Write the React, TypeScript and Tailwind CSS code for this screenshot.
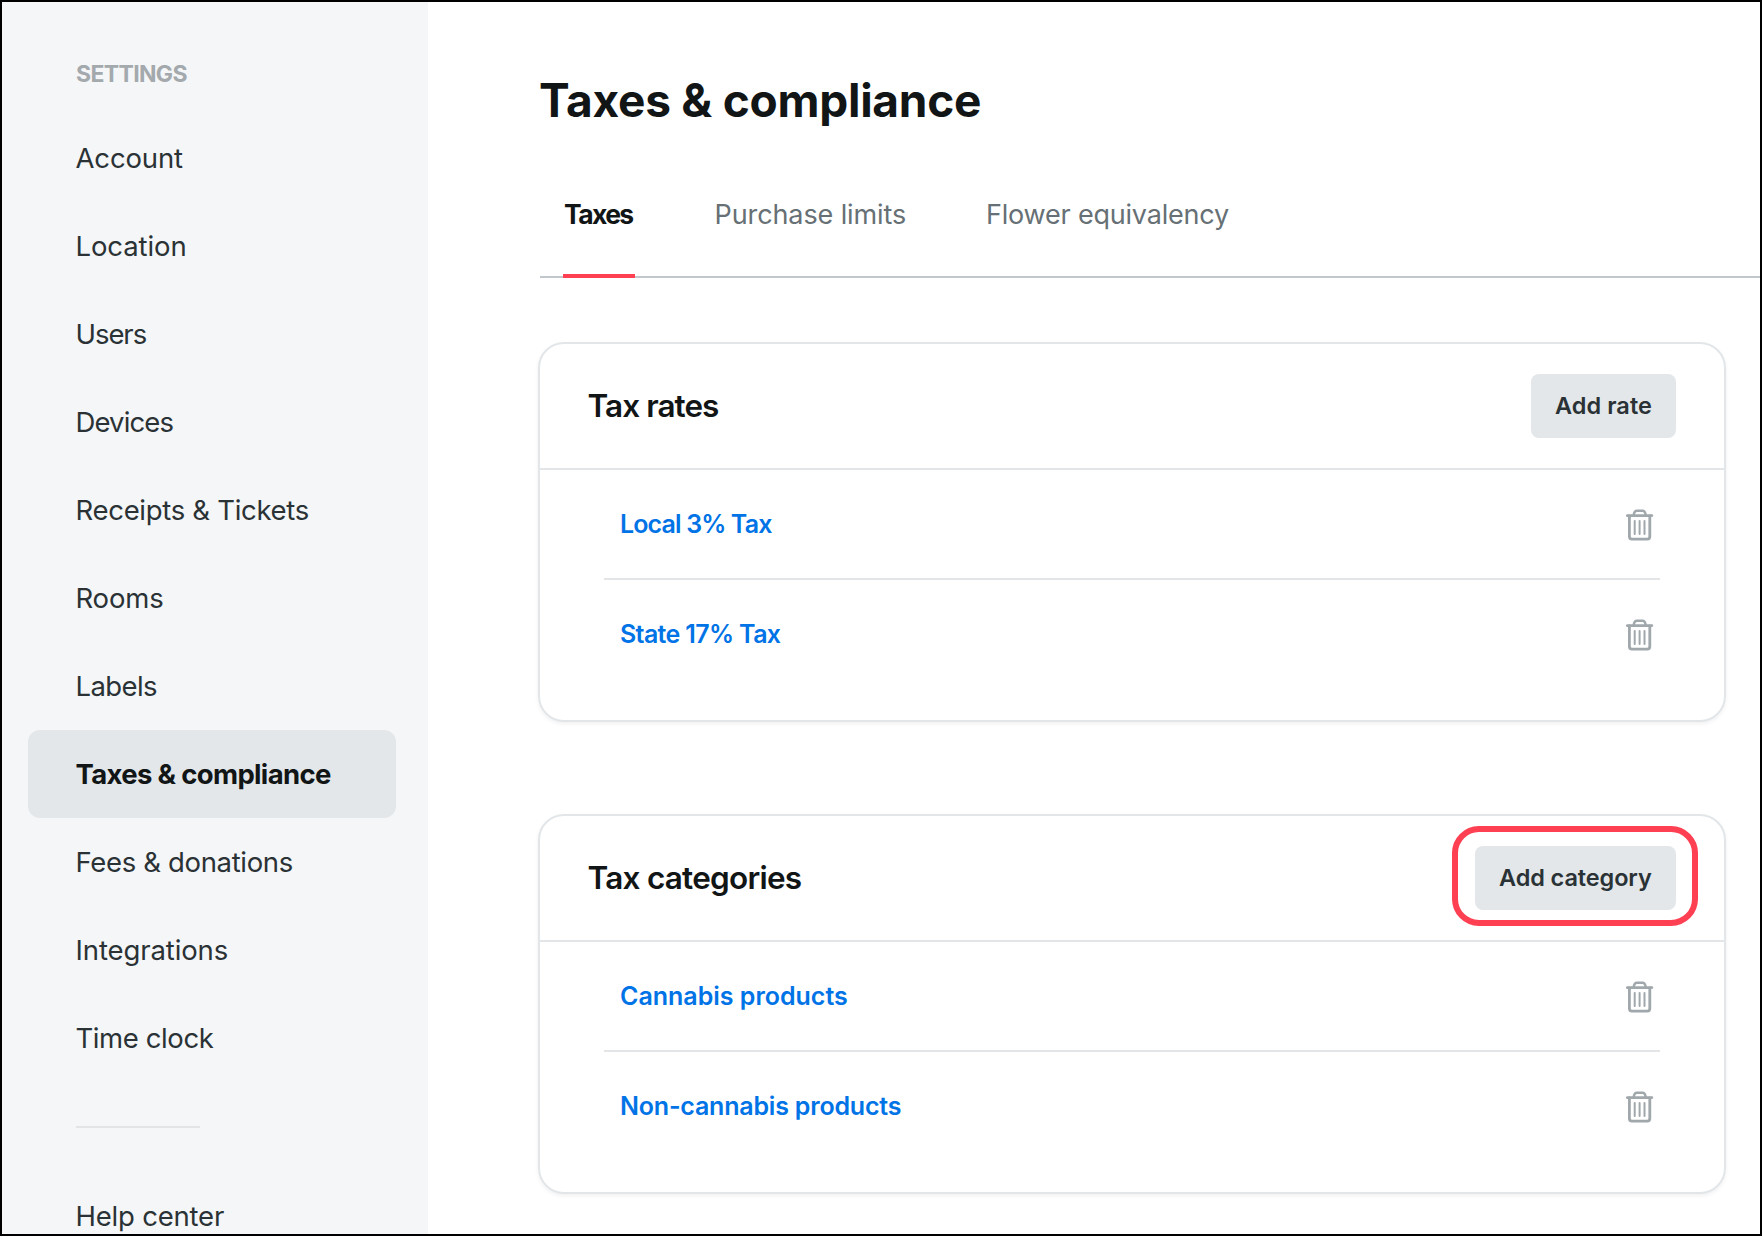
type NavEntry = { label: string; tracking: string; active?: boolean };

const navItems: NavEntry[] = [
  { label: "Account", tracking: "tracking-[-0.15px]" },
  { label: "Location", tracking: "tracking-[-0.1px]" },
  { label: "Users", tracking: "tracking-[-1.05px]" },
  { label: "Devices", tracking: "tracking-[-0.88px]" },
  { label: "Receipts & Tickets", tracking: "tracking-[-0.3px]" },
  { label: "Rooms", tracking: "tracking-[-0.17px]" },
  { label: "Labels", tracking: "tracking-[-0.62px]" },
  { label: "Taxes & compliance", tracking: "tracking-[-0.66px]", active: true },
  { label: "Fees & donations", tracking: "tracking-[-0.34px]" },
  { label: "Integrations", tracking: "tracking-[-0.11px]" },
  { label: "Time clock", tracking: "tracking-[-0.4px]" },
];

type Row = { label: string; tracking: string };

function NavItem({ label, tracking, active }: NavEntry) {
  return (
    <a
      className={`flex h-[88px] shrink-0 items-center whitespace-nowrap rounded-xl pl-[47.5px] pt-0.5 text-[27.5px] ${tracking} ${
        active ? "bg-[#e3e7ea] font-bold text-[#111516]" : "text-[#2a3235]"
      }`}
    >
      {label}
    </a>
  );
}

function TrashIcon() {
  return (
    <svg
      className="mt-0.5 h-8 w-7"
      viewBox="0 0 28 32"
      fill="none"
      stroke="#a1a8ac"
      strokeLinecap="round"
      strokeLinejoin="round"
    >
      <path strokeWidth="2.7" d="M1.3 6.6H25.9" />
      <path strokeWidth="2.5" d="M7.7 6.2C8 3 9.2 1.7 11 1.7H16.4C18.2 1.7 19.4 3 19.7 6.2" />
      <path strokeWidth="2.8" d="M3.4 7V27.6C3.4 29.3 4.1 30.1 5.8 30.1H21.4C23.1 30.1 23.8 29.3 23.8 27.6V7" />
      <path strokeWidth="2" d="M8.7 12V24.9M13.6 12V24.9M18.5 12V24.9" />
    </svg>
  );
}

function Card({
  title,
  titleTracking,
  action,
  actionClass,
  rows,
  highlighted,
}: {
  title: string;
  titleTracking: string;
  action: string;
  actionClass: string;
  rows: Row[];
  highlighted?: boolean;
}) {
  return (
    <section className="h-[380px] w-[1188px] rounded-[26px] border-2 border-[#e2e6e9] shadow-[0_2px_4px_rgba(0,0,0,0.06)]">
      <header className="flex h-[126px] items-center justify-between border-b-2 border-[#e2e6e9] pl-[47.5px] pr-12">
        <h2 className={`text-[31.5px] font-semibold text-[#111516] ${titleTracking}`}>{title}</h2>
        <div className="relative">
          <button
            className={`flex h-16 items-center whitespace-nowrap rounded-lg bg-[#e3e7ea] pl-6 text-[23.5px] font-semibold text-[#2a3235] ${actionClass}`}
          >
            {action}
          </button>
          {highlighted && (
            <div className="pointer-events-none absolute -bottom-4 -left-[23px] -right-[22px] -top-5 rounded-[27px] border-[6px] border-[#ff4053]" />
          )}
        </div>
      </header>
      <ul className="mx-16">
        {rows.map((row, i) => (
          <li
            key={row.label}
            className={`flex items-center justify-between pl-4 pr-1.5 ${
              i < rows.length - 1 ? "h-[110px] border-b-2 border-[#e2e6e9]" : "h-[108px]"
            }`}
          >
            <a className={`pt-0.5 text-[25px] font-semibold text-[#0073e6] ${row.tracking}`}>{row.label}</a>
            <TrashIcon />
          </li>
        ))}
      </ul>
    </section>
  );
}

export default function App() {
  return (
    <div className="flex h-[1236px] w-[1762px] overflow-hidden border-2 border-black bg-white font-['Inter',sans-serif]">
      <aside className="flex w-[426px] shrink-0 flex-col bg-[#f5f6f8] pl-[26px] pr-8 pt-[58px]">
        <div className="h-[54px] shrink-0 pl-12 text-[23px] font-bold leading-7 tracking-[-0.65px] text-[#a3a9ac]">
          SETTINGS
        </div>
        <nav className="flex shrink-0 flex-col">
          {navItems.map((item) => (
            <NavItem key={item.label} {...item} />
          ))}
          <hr className="mb-[44px] ml-12 mt-[44px] w-[124px] border-t-2 border-[#e2e4e6]" />
          <NavItem label="Help center" tracking="tracking-[-0.2px]" />
        </nav>
      </aside>
      <main className="flex min-w-0 grow flex-col">
        <h1 className="ml-[111px] mt-[70px] text-[46px] font-bold leading-[56px] tracking-[-0.25px] text-[#111516]">
          Taxes &amp; compliance
        </h1>
        <div className="ml-[112px] flex h-[150px] items-end border-b-2 border-[#c1c7cc] pl-[23px] text-[27px]">
          <a className="-mb-0.5 flex h-[84px] w-[72px] border-b-4 border-[#ff4053] pl-px text-[26.5px] font-bold leading-[40px] tracking-[-1.6px] text-[#111516]">
            Taxes
          </a>
          <a className="ml-[79.5px] h-[82px] w-[271.5px] leading-[42px] tracking-[-0.1px] text-[#667075]">Purchase limits</a>
          <a className="h-[82px] leading-[42px] tracking-[-0.2px] text-[#667075]">Flower equivalency</a>
        </div>
        <div className="ml-[110px] mt-16 flex flex-col gap-[92px]">
          <Card
            title="Tax rates"
            titleTracking="tracking-[-0.95px]"
            action="Add rate"
            actionClass="w-[145px] tracking-[0.05px]"
            rows={[
              { label: "Local 3% Tax", tracking: "tracking-[-0.87px]" },
              { label: "State 17% Tax", tracking: "tracking-[-0.65px]" },
            ]}
          />
          <Card
            title="Tax categories"
            titleTracking="tracking-[-0.76px]"
            action="Add category"
            actionClass="w-[201px] tracking-[-0.1px]"
            rows={[
              { label: "Cannabis products", tracking: "tracking-[-0.01px]" },
              { label: "Non-cannabis products", tracking: "tracking-[-0.2px]" },
            ]}
            highlighted
          />
        </div>
      </main>
    </div>
  );
}
